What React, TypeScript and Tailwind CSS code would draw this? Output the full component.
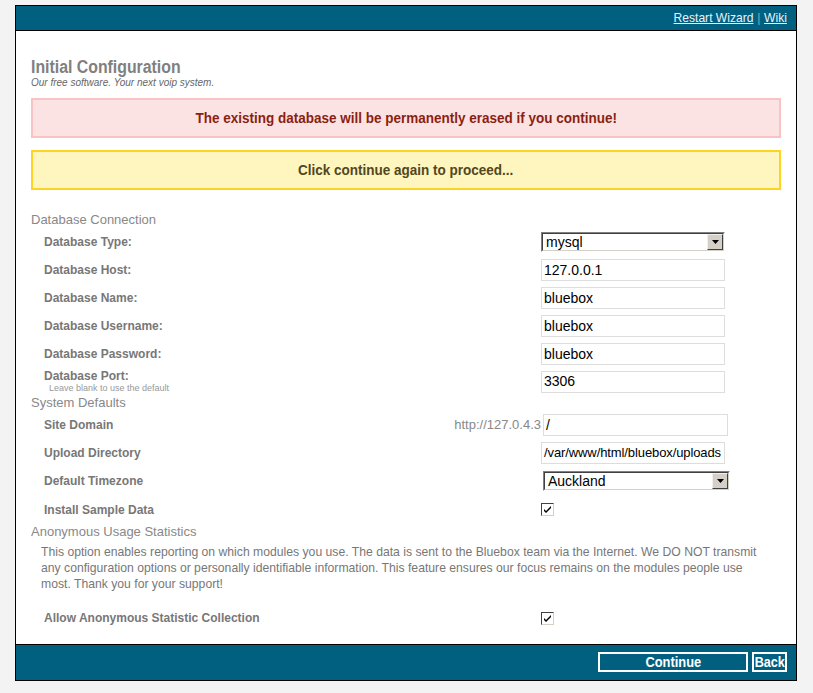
import React from "react";

function Select({ value, w }: { value: string; w: string }) {
  return (
    <div className={`flex h-[20px] ${w} border border-t-[#808080] border-l-[#808080] border-b-white border-r-white bg-white`}>
      <div className="flex flex-1 border border-t-[#404040] border-l-[#404040] border-b-[#d4d0c8] border-r-[#d4d0c8]">
        <div className="flex-1 pl-[3px] text-[14px] leading-[16px] text-black">{value}</div>
        <div className="flex h-[16px] w-[16px] items-center justify-center border border-t-[#f0f0f0] border-l-[#f0f0f0] border-b-[#404040] border-r-[#404040] bg-[#d4d0c8]">
          <svg width="7" height="4" viewBox="0 0 7 4"><path d="M0 0h7L3.5 4z" fill="#000" /></svg>
        </div>
      </div>
    </div>
  );
}

function Input({ value, w = "w-[184px]", cls = "text-[14px]" }: { value: string; w?: string; cls?: string }) {
  return (
    <div className={`flex h-[22px] ${w} items-center overflow-hidden whitespace-nowrap border border-[#dddddd] bg-white px-[2px] ${cls} text-black`}>
      {value}
    </div>
  );
}

function Check() {
  return (
    <div className="flex h-[13px] w-[13px] items-center justify-center border border-t-[#404040] border-l-[#404040] border-b-[#d4d0c8] border-r-[#d4d0c8] bg-white">
      <svg width="9" height="9" viewBox="0 0 9 9">
        <path d="M1 4l2 2 5-5v2L3 8 1 6z" fill="#000" />
      </svg>
    </div>
  );
}

function Row({ label, children, h = "h-[28px]", extra }: { label: React.ReactNode; children: React.ReactNode; h?: string; extra?: React.ReactNode }) {
  return (
    <div className={`flex ${h} items-center`}>
      <div className="flex w-[510px] items-center justify-between pl-[13px]">
        <div className="text-[12px] font-bold text-[#777]">{label}</div>
        {extra}
      </div>
      <div className="flex items-center">{children}</div>
    </div>
  );
}

export default function App() {
  return (
    <div className="min-h-[693px] bg-[#f3f3f3] pt-[5px] pl-[15px]" style={{ fontFamily: '"Liberation Sans", Arial, sans-serif' }}>
      <div className="w-[782px] border border-black bg-white">
        <div className="flex h-[25px] items-center justify-end border-b border-black bg-[#015f80] pr-[9px] text-[13px] text-[#e6f4ff]">
          <span className="inline-block origin-right scale-x-[0.93] whitespace-nowrap">
            <span className="underline">Restart Wizard</span>
            <span className="mx-[4px] text-[#7fa9bd]">|</span>
            <span className="underline">Wiki</span>
          </span>
        </div>
        <div className="px-[15px]">
          <div className="pt-[26px] text-[18px] leading-[20px] font-bold text-[#808080]">
            <span className="inline-block origin-left scale-x-[0.88] whitespace-nowrap">Initial Configuration</span>
          </div>
          <div className="text-[10px] leading-[11px] italic text-[#666]">Our free software. Your next voip system.</div>
          <div className="mt-[10px] flex h-[40px] items-center justify-center border-2 border-[#fbc2c4] bg-[#fbe3e4] text-[15px] font-bold text-[#8a1f11]">
            <span className="inline-block scale-x-[0.9] whitespace-nowrap">The existing database will be permanently erased if you continue!</span>
          </div>
          <div className="mt-[12px] flex h-[40px] items-center justify-center border-2 border-[#ffd324] bg-[#fff6bf] text-[15px] font-bold text-[#514721]">
            <span className="inline-block scale-x-[0.9] whitespace-nowrap">Click continue again to proceed...</span>
          </div>
          <div className="mt-[22px] text-[13px] leading-[16px] text-[#888]">Database Connection</div>
          <Row label="Database Type:"><Select value="mysql" w="w-[184px]" /></Row>
          <Row label="Database Host:"><Input value="127.0.0.1" /></Row>
          <Row label="Database Name:"><Input value="bluebox" /></Row>
          <Row label="Database Username:"><Input value="bluebox" /></Row>
          <Row label="Database Password:"><Input value="bluebox" /></Row>
          <div className="flex h-[27px] items-center">
            <div className="w-[510px] pl-[13px]">
              <div className="text-[12px] leading-[13px] font-bold text-[#777]">Database Port:</div>
              <div className="pl-[5px] text-[9px] leading-[10px] text-[#999]">Leave blank to use the default</div>
            </div>
            <Input value="3306" />
          </div>
          <div className="text-[13px] leading-[16px] text-[#888]">System Defaults</div>
          <Row label="Site Domain" extra={<span className="text-[13px] text-[#888]">http://127.0.4.3</span>}>
            <div className="pl-[2px]"><Input value="/" w="w-[185px]" /></div>
          </Row>
          <Row label="Upload Directory"><Input value="/var/www/html/bluebox/uploads" cls="text-[13px] tracking-[-0.1px]" /></Row>
          <Row label="Default Timezone"><div className="pl-[2px]"><Select value="Auckland" w="w-[187px]" /></div></Row>
          <Row label="Install Sample Data" h="h-[29px]"><Check /></Row>
          <div className="text-[13px] leading-[16px] text-[#888]">Anonymous Usage Statistics</div>
          <div className="mt-[4px] pl-[10px] pr-[13px] text-[12.2px] leading-[16px] text-[#777]">
            This option enables reporting on which modules you use. The data is sent to the Bluebox team via the Internet. We DO NOT transmit any configuration options or personally identifiable information. This feature ensures our focus remains on the modules people use most. Thank you for your support!
          </div>
          <div className="mt-[12px] mb-[12px]">
            <Row label="Allow Anonymous Statistic Collection"><Check /></Row>
          </div>
        </div>
        <div className="flex h-[36px] items-center justify-end gap-[4px] border-t border-black bg-[#015f80] pr-[9px] pb-[1px]">
          <div className="flex h-[20px] w-[150px] items-center justify-center border-2 border-white text-[14px] font-bold text-white">
            <span className="inline-block scale-x-[0.92]">Continue</span>
          </div>
          <div className="flex h-[20px] w-[35px] items-center justify-center overflow-hidden border-2 border-white text-[14px] font-bold text-white">
            <span className="inline-block scale-x-[0.9]">Back</span>
          </div>
        </div>
      </div>
    </div>
  );
}
